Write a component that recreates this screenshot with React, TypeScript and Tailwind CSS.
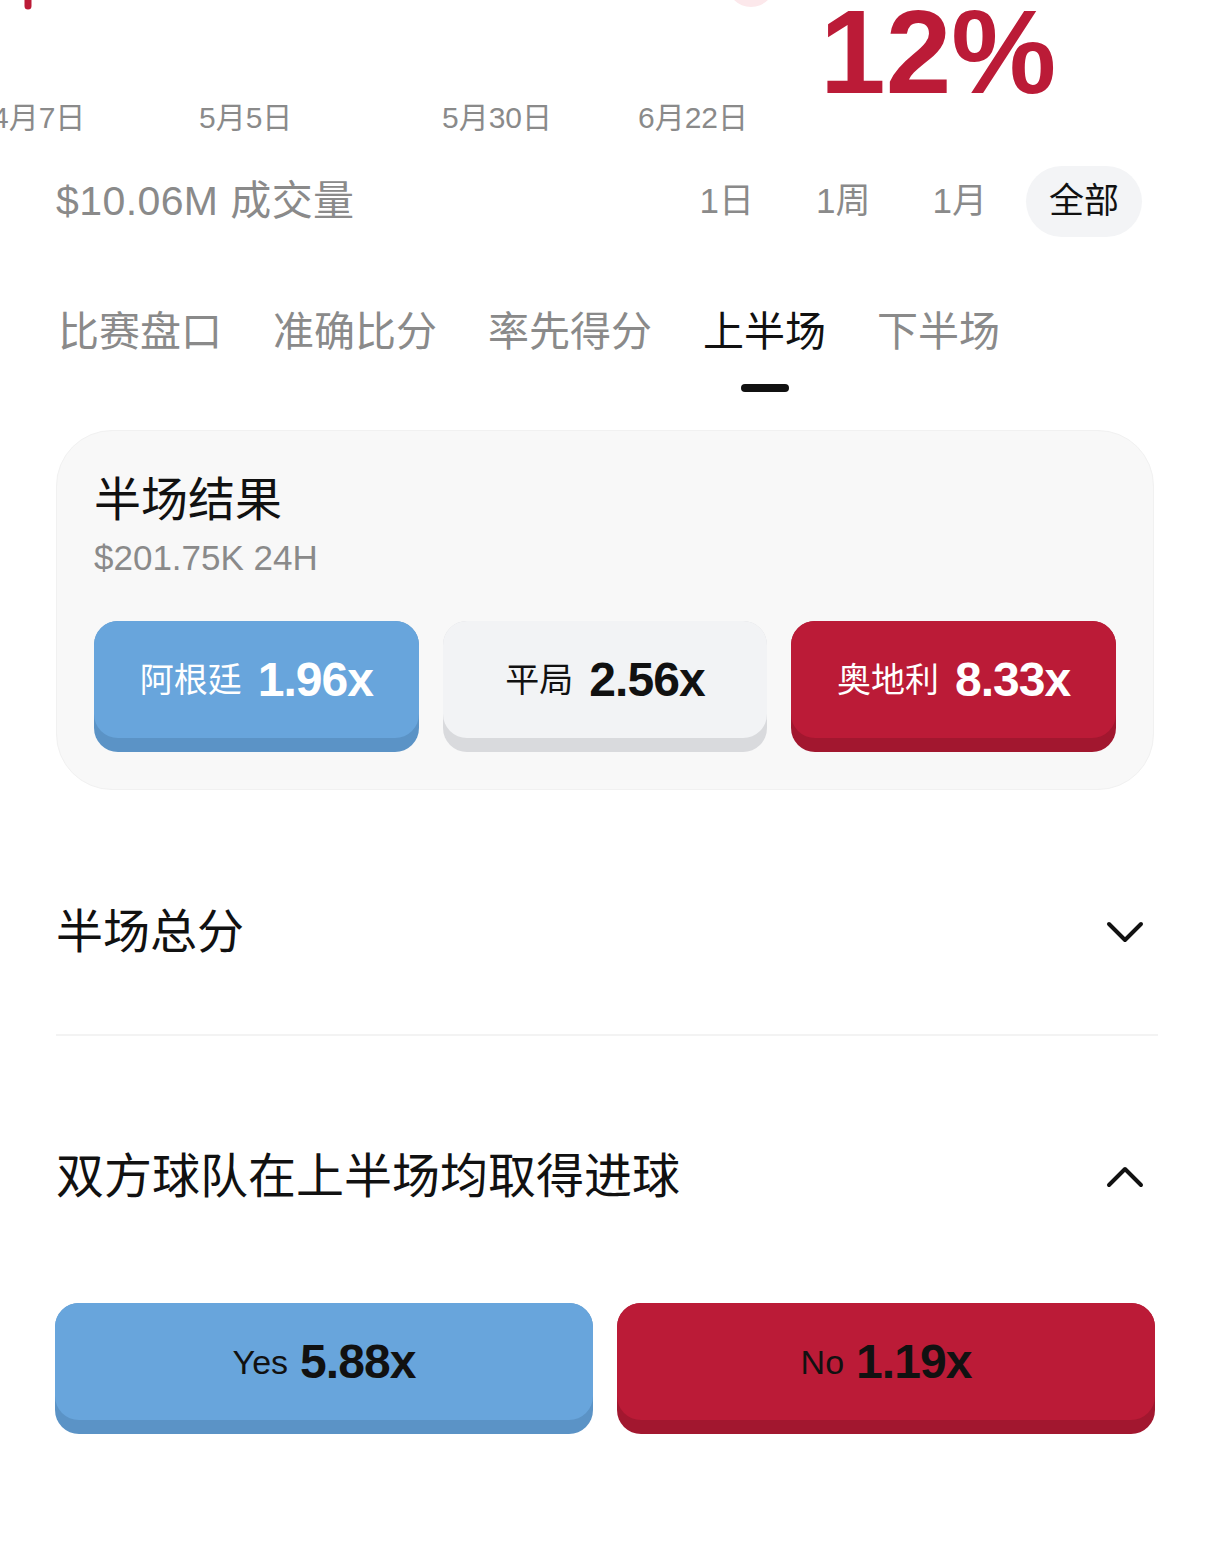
import React from 'react';

const dates = [
  { label: '4月7日', pos: 'left-[-8px]' },
  { label: '5月5日', pos: 'left-[199px]' },
  { label: '5月30日', pos: 'left-[442px]' },
  { label: '6月22日', pos: 'left-[638px]' },
];

const ranges = ['1日', '1周', '1月', '全部'];
const tabs = ['比赛盘口', '准确比分', '率先得分', '上半场', '下半场'];

function OddsButton({
  label,
  odds,
  face,
  ledge,
  text,
  gap = 'gap-[16px]',
}: {
  label: string;
  odds: string;
  face: string;
  ledge: string;
  text: string;
  gap?: string;
}) {
  return (
    <button className={`rounded-[24px] pb-[14px] ${ledge}`}>
      <div className={`flex h-[117px] items-center justify-center rounded-[24px] ${gap} ${face} ${text}`}>
        <span className="text-[34px] leading-none">{label}</span>
        <span className="text-[48px] font-bold leading-none tracking-[-0.02em]">{odds}</span>
      </div>
    </button>
  );
}

function Chevron({ up }: { up?: boolean }) {
  return (
    <svg width="38" height="22" viewBox="0 0 38 22" fill="none">
      <polyline
        points={up ? '3,19 19,3 35,19' : '3,3 19,19 35,3'}
        stroke="#111"
        strokeWidth="4"
        strokeLinecap="round"
        strokeLinejoin="round"
      />
    </svg>
  );
}

export default function App() {
  return (
    <div className="min-h-[1552px] w-[1214px] overflow-hidden bg-white font-['Liberation_Sans','Noto_Sans_CJK_SC',sans-serif] text-[#111]">
      {/* Chart tail + price */}
      <div className="flex h-[150px]">
        <div className="relative h-full w-[790px] shrink-0">
          <svg className="absolute left-0 top-0" width="790" height="100">
            <circle cx="751" cy="-17" r="24" fill="#fce8eb" />
            <line x1="28" y1="-12" x2="28" y2="6" stroke="#bb1b37" strokeWidth="7" strokeLinecap="round" />
          </svg>
          {dates.map((d) => (
            <span
              key={d.label}
              className={`absolute top-[99px] text-[30px] leading-[38px] text-[#8a8a8a] ${d.pos}`}
            >
              {d.label}
            </span>
          ))}
        </div>
        <div className="ml-[30px] mt-[-7px] text-[118px] font-bold leading-none text-[#bb1b37]">12%</div>
      </div>

      <div className="px-[56px]">
        {/* Volume + range */}
        <div className="mt-[16px] flex h-[71px] items-center justify-between">
          <span className="text-[41px] leading-none tracking-[0.01em] text-[#8a8a8a]">$10.06M 成交量</span>
          <div className="mr-[16px] flex items-center gap-[16px]">
            {ranges.map((r) => (
              <span
                key={r}
                className={
                  r === '全部'
                    ? 'flex h-[71px] items-center rounded-full bg-[#f3f4f6] px-[23px] text-[35px] text-[#111]'
                    : 'flex h-[71px] items-center px-[23px] text-[35px] text-[#8a8a8a]'
                }
              >
                {r}
              </span>
            ))}
          </div>
        </div>

        {/* Tabs */}
        <div className="mt-[69px] flex gap-[51px] pl-[2px]">
          {tabs.map((t) => (
            <div key={t} className="flex flex-col items-center">
              <span
                className={
                  t === '上半场'
                    ? 'text-[41px] leading-[52px] text-[#111]'
                    : 'text-[41px] leading-[52px] text-[#8a8a8a]'
                }
              >
                {t}
              </span>
              <div
                className={
                  t === '上半场'
                    ? 'mt-[26px] h-[8px] w-[48px] rounded-full bg-[#111]'
                    : 'mt-[26px] h-[8px] w-[48px] rounded-full bg-transparent'
                }
              />
            </div>
          ))}
        </div>

        {/* Half-time result card */}
        <div className="mt-[38px] w-[1098px] rounded-[56px] border border-[#f1f1f1] bg-[#f8f8f8] p-[37px]">
          <h2 className="text-[47px] leading-[64px]">半场结果</h2>
          <p className="mt-[4px] text-[35px] leading-[44px] text-[#8a8a8a]">$201.75K 24H</p>
          <div className="mt-[41px] grid grid-cols-3 gap-[24px]">
            <OddsButton label="阿根廷" odds="1.96x" face="bg-[#68a5dc]" ledge="bg-[#5b93c6]" text="text-white" />
            <OddsButton label="平局" odds="2.56x" face="bg-[#f2f3f5]" ledge="bg-[#d9dadd]" text="text-[#111]" />
            <OddsButton label="奥地利" odds="8.33x" face="bg-[#bb1b37]" ledge="bg-[#a2172f]" text="text-white" />
          </div>
        </div>

        {/* Accordion: half total */}
        <div className="border-b-2 border-[#f3f3f3] pb-[70px] pt-[110px]">
          <div className="flex items-center justify-between pr-[14px]">
            <h3 className="text-[47px] leading-[64px]">半场总分</h3>
            <Chevron />
          </div>
        </div>

        {/* Accordion: both teams score */}
        <div className="pt-[109px]">
          <div className="flex items-center justify-between pr-[14px]">
            <h3 className="text-[48px] leading-[64px]">双方球队在上半场均取得进球</h3>
            <Chevron up />
          </div>
          <div className="ml-[-1px] mt-[94px] grid w-[1100px] grid-cols-2 gap-[24px]">
            <OddsButton label="Yes" odds="5.88x" face="bg-[#68a5dc]" ledge="bg-[#5b93c6]" text="text-[#111]" gap="gap-[12px]" />
            <OddsButton label="No" odds="1.19x" face="bg-[#bb1b37]" ledge="bg-[#a2172f]" text="text-[#111]" gap="gap-[12px]" />
          </div>
        </div>
      </div>
    </div>
  );
}
